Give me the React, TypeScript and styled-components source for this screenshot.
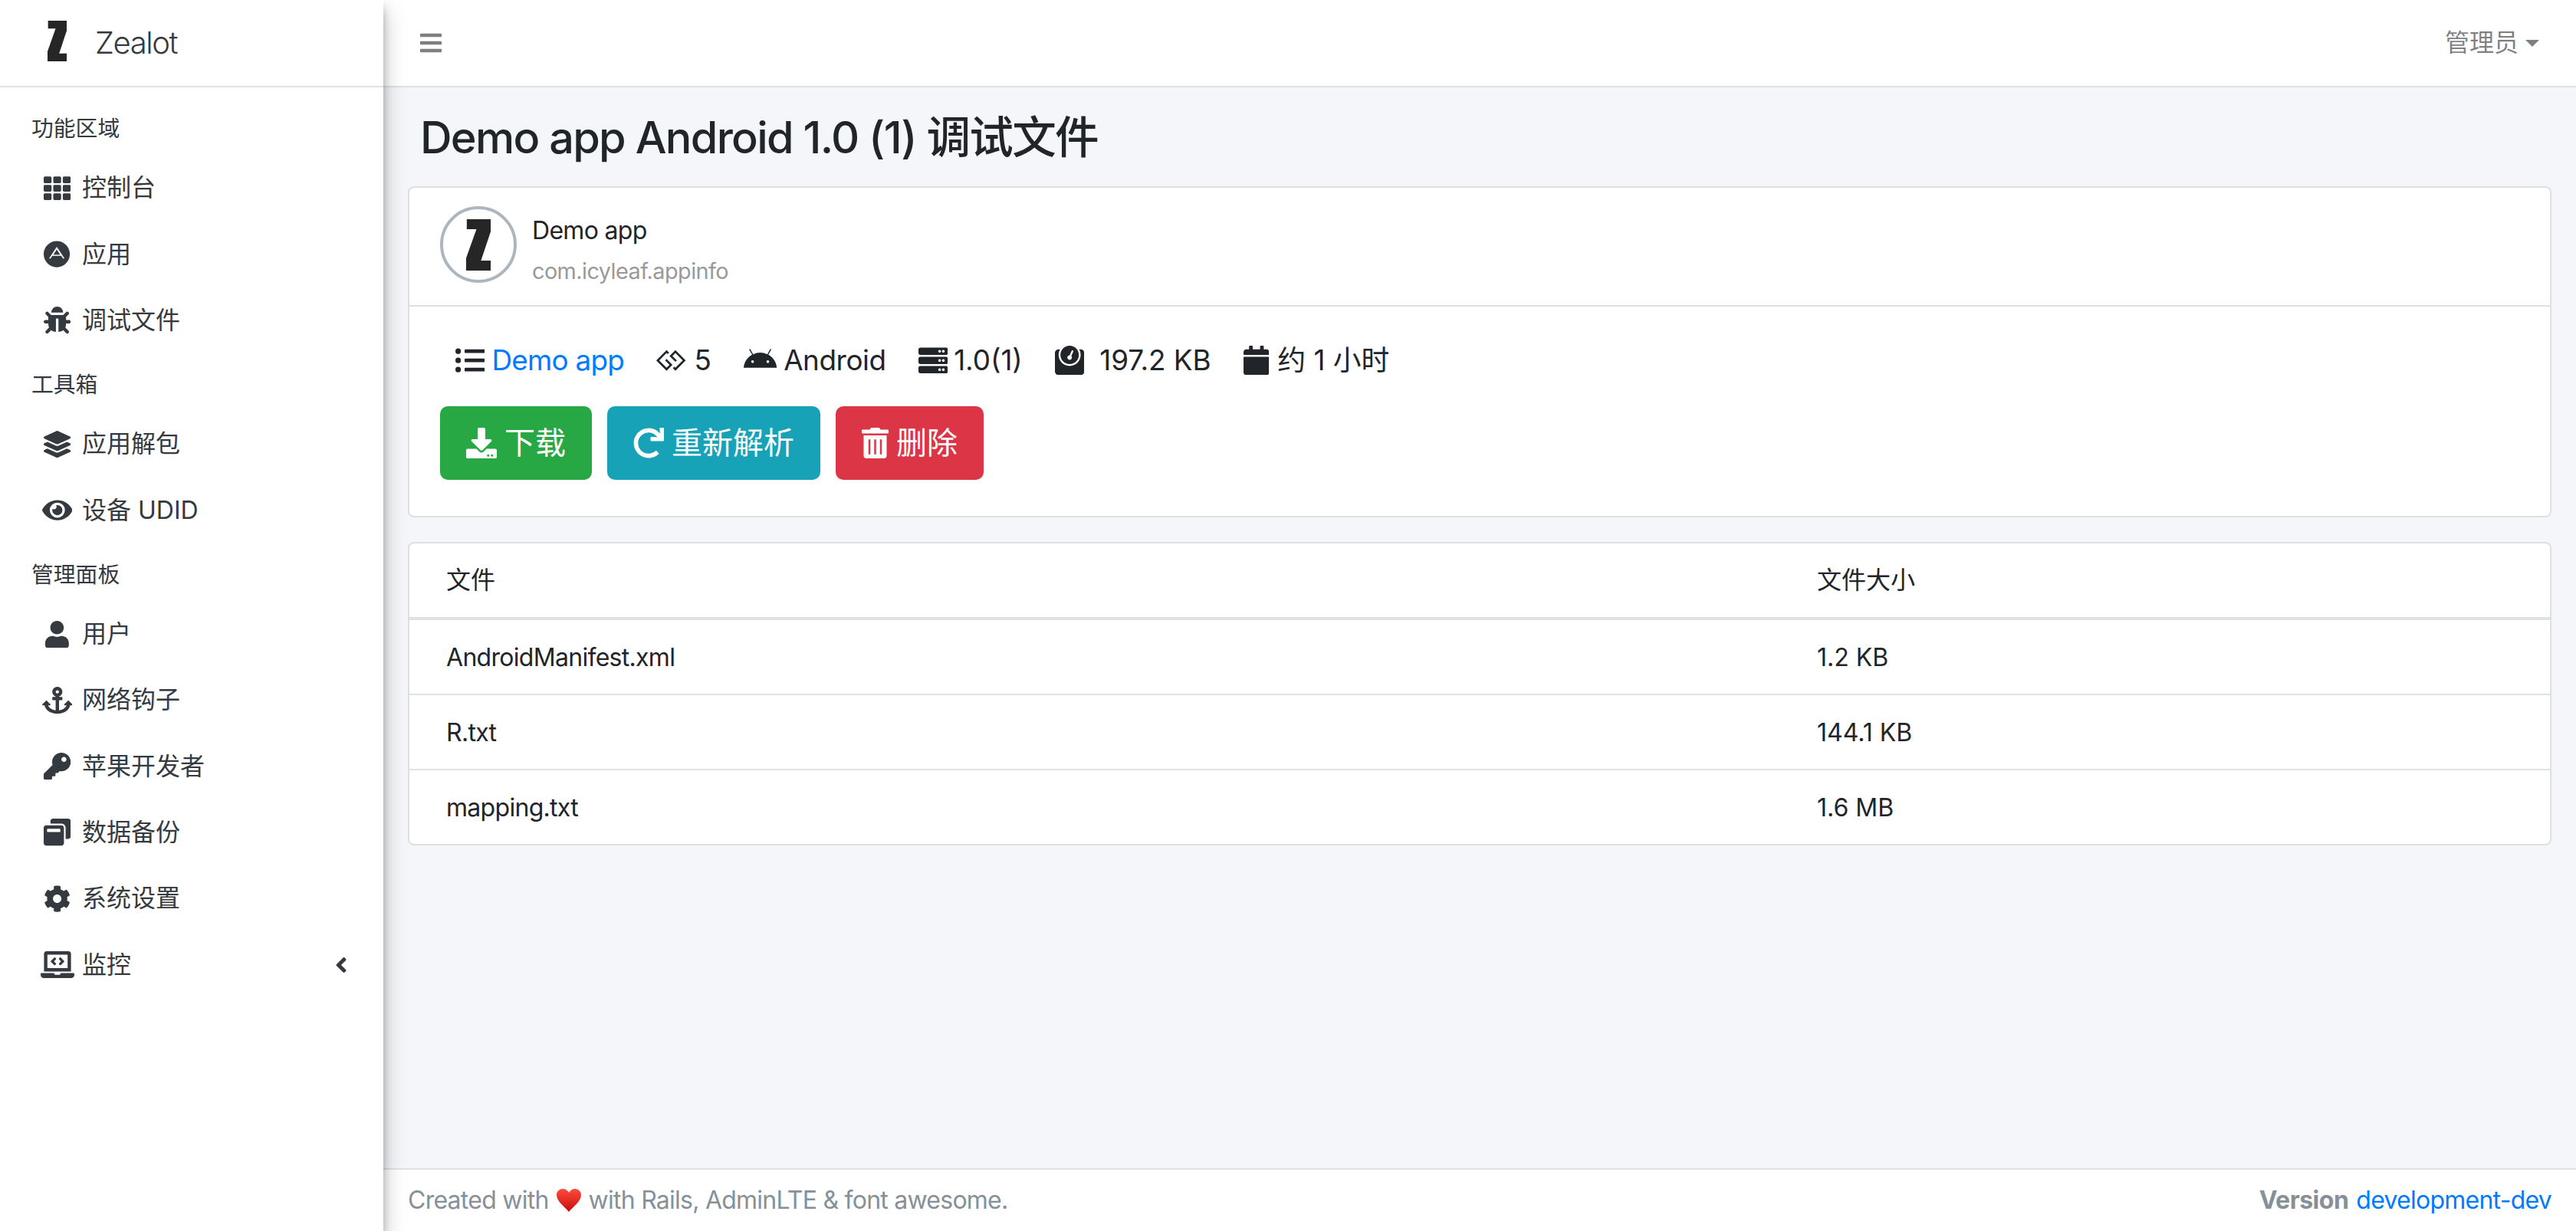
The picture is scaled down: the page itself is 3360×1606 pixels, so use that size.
import React, { FC, ReactNode } from "react";
import styled, { createGlobalStyle } from "styled-components";
import {
  FaAdn,
  FaAnchor,
  FaAndroid,
  FaAngleLeft,
  FaBars,
  FaBug,
  FaCalendar,
  FaCog,
  FaDownload,
  FaEye,
  FaGg,
  FaKey,
  FaLaptopCode,
  FaLayerGroup,
  FaListUl,
  FaRedo,
  FaServer,
  FaTh,
  FaTrashAlt,
  FaUser,
  FaWeight,
  FaWindowRestore,
} from "react-icons/fa";

const GlobalStyle = createGlobalStyle`
  html, body {
    margin: 0;
    padding: 0;
    height: 100%;
  }
  body {
    font-family: Inter, "Noto Sans CJK SC", sans-serif;
    font-size: 32px;
    line-height: 48px;
    color: #212529;
    background: #f4f6f9;
  }
  svg {
    display: block;
  }
`;

const Layout = styled.div`
  display: flex;
  width: 3360px;
  height: 1606px;
  overflow: hidden;
`;

const Sidebar = styled.aside`
  position: relative;
  z-index: 10;
  flex: 0 0 500px;
  background: #fff;
  color: #343a40;
  box-shadow: 0 14px 28px rgba(0, 0, 0, 0.25), 0 10px 10px rgba(0, 0, 0, 0.22);
`;

const Brand = styled.div`
  display: flex;
  align-items: center;
  box-sizing: border-box;
  height: 114px;
  padding-left: 62px;
  border-bottom: 2px solid #dee2e6;
`;

const BrandLogo = styled.svg`
  width: 25px;
  height: 53px;
  margin: 0 37px 6px 0;
`;

const BrandName = styled.span`
  font-size: 40px;
  font-weight: 300;
  letter-spacing: -1.4px;
`;

const SideNav = styled.nav`
  padding: 16px 16px 0;
`;

const NavHeader = styled.div`
  padding: 16px 25px;
  font-size: 28.8px;
  line-height: 43.2px;
`;

const NavLink = styled.a`
  display: flex;
  align-items: center;
  margin-bottom: 6.3px;
  padding: 16px 31px 16px 33px;
  line-height: 48px;
`;

/* font awesome glyphs are 512 units high, the width differs per icon */
const Glyph = styled.span<{ $units?: number }>`
  display: block;
  svg {
    height: 1em;
    width: ${(p) => (p.$units ?? 512) / 512}em;
  }
`;

const NavIcon = styled.span`
  flex: 0 0 51px;
  display: flex;
  justify-content: center;
  margin-right: 7px;
  font-size: 35.2px;
`;

const NavArrow = styled.span`
  margin-left: auto;
  font-size: 32px;
`;

const Main = styled.div`
  flex: 1;
  display: flex;
  flex-direction: column;
  min-width: 0;
`;

const TopBar = styled.header`
  display: flex;
  align-items: center;
  justify-content: space-between;
  box-sizing: border-box;
  height: 114px;
  padding: 0 48px;
  background: #fff;
  border-bottom: 2px solid #dee2e6;
  color: rgba(0, 0, 0, 0.5);
`;

const MenuToggle = styled.span`
  font-size: 32px;
`;

const UserMenu = styled.span`
  display: flex;
  align-items: center;
  gap: 9px;
`;

const Caret = styled.i`
  width: 0;
  height: 0;
  border-top: 9.6px solid currentColor;
  border-left: 9.6px solid transparent;
  border-right: 9.6px solid transparent;
`;

const Content = styled.main`
  flex: 1;
  padding: 0 32px;
`;

const PageTitle = styled.h1`
  margin: 0;
  padding: 31px 16px 29px;
  font-size: 57.6px;
  line-height: 69px;
  font-weight: 500;
  letter-spacing: -1.7px;
`;

const Card = styled.section`
  margin-bottom: 32px;
  background: #fff;
  border: 2px solid rgba(0, 0, 0, 0.125);
  border-radius: 8px;
  overflow: hidden;
`;

const CardHeader = styled.div`
  display: flex;
  align-items: center;
  padding: 24px 40px 29px;
  border-bottom: 2px solid rgba(0, 0, 0, 0.125);
`;

const Avatar = styled.div`
  display: flex;
  align-items: center;
  justify-content: center;
  box-sizing: border-box;
  width: 100px;
  height: 100px;
  margin-right: 20px;
  border: 4px solid #adb5bd;
  border-radius: 50%;
`;

const AvatarLogo = styled.svg`
  width: 32px;
  height: 67px;
`;

const AppInfo = styled.div`
  box-sizing: border-box;
  height: 100px;
  padding-top: 12px;
`;

const AppName = styled.div`
  font-size: 32px;
  line-height: 40px;
  letter-spacing: -0.7px;
  margin-bottom: 13px;
`;

const AppId = styled.div`
  font-size: 28.8px;
  line-height: 40px;
  letter-spacing: -0.55px;
  color: #999;
`;

const CardBody = styled.div`
  padding: 40px 40px 47px;
`;

const MetaRow = styled.div`
  display: flex;
  gap: 42px;
  padding-left: 20px;
  margin-bottom: 30px;
  font-size: 36.8px;
  line-height: 60px;
`;

const MetaItem = styled.span<{ $gap?: number }>`
  display: flex;
  align-items: center;
  gap: ${(p) => p.$gap ?? 11}px;
`;

const MetaIcon = styled(Glyph)`
  font-size: 38.4px;
`;

const MetaText = styled.span`
  letter-spacing: -0.4px;
`;

const MetaLink = styled.span`
  color: #007bff;
  letter-spacing: -0.7px;
`;

const Actions = styled.div`
  display: flex;
  gap: 20px;
`;

const Button = styled.a<{ $color: string }>`
  display: flex;
  align-items: center;
  gap: 10px;
  box-sizing: border-box;
  height: 96px;
  padding: 0 34px;
  border-radius: 10px;
  background: ${(p) => p.$color};
  color: #fff;
  font-size: 40px;
`;

const FileTable = styled.table`
  width: 100%;
  table-layout: fixed;
  border-collapse: collapse;
  th,
  td {
    padding: 24px 48px;
    text-align: left;
    font-weight: 400;
  }
  th {
    border-bottom: 4px solid #dee2e6;
  }
  td {
    padding: 25px 48px 23px;
    border-top: 2px solid #dee2e6;
  }
  tbody tr:first-child td {
    border-top: 0;
  }
`;

const NameColumn = styled.col`
  width: 1788px;
`;

const FileName = styled.td`
  letter-spacing: -0.7px;
`;

const Footer = styled.footer`
  display: flex;
  align-items: center;
  justify-content: space-between;
  box-sizing: border-box;
  height: 82px;
  padding: 0 32px;
  background: #fff;
  border-top: 2px solid #dee2e6;
  color: #869099;
  letter-spacing: -0.75px;
`;

const FooterText = styled.span`
  display: flex;
  align-items: center;
  gap: 10px;
`;

const VersionLabel = styled.b`
  font-weight: 700;
  letter-spacing: -0.5px;
`;

const VersionLink = styled.a`
  color: #007bff;
  margin-left: 10px;
`;

const ZMark: FC = () => (
  <polygon
    points="2,0 76,0 76,38 46,126 76,126 76,156 0,156 0,118 32,30 2,30"
    fill="#262626"
  />
);

const Heart: FC = () => (
  <svg width="32" height="30" viewBox="0 0 32 30">
    <defs>
      <linearGradient id="heartFill" x1="0" y1="0" x2="0" y2="1">
        <stop offset="0" stopColor="#ff4a3d" />
        <stop offset="1" stopColor="#c80d0d" />
      </linearGradient>
    </defs>
    <path
      d="M16 30C10 23 0 16 0 8 0 3 4 0 8 0c3.500 0 6.500 2 8 5 1.500-3 4.500-5 8-5 4 0 8 3 8 8 0 8-10 15-16 22z"
      fill="url(#heartFill)"
    />
  </svg>
);

type NavEntry =
  | { header: string }
  | { label: string; icon: ReactNode; units?: number; arrow?: boolean };

const navEntries: NavEntry[] = [
  { header: "功能区域" },
  { label: "控制台", icon: <FaTh /> },
  { label: "应用", icon: <FaAdn />, units: 496 },
  { label: "调试文件", icon: <FaBug /> },
  { header: "工具箱" },
  { label: "应用解包", icon: <FaLayerGroup /> },
  { label: "设备 UDID", icon: <FaEye />, units: 576 },
  { header: "管理面板" },
  { label: "用户", icon: <FaUser />, units: 448 },
  { label: "网络钩子", icon: <FaAnchor />, units: 576 },
  { label: "苹果开发者", icon: <FaKey /> },
  { label: "数据备份", icon: <FaWindowRestore /> },
  { label: "系统设置", icon: <FaCog /> },
  { label: "监控", icon: <FaLaptopCode />, units: 640, arrow: true },
];

const files = [
  { name: "AndroidManifest.xml", size: "1.2 KB" },
  { name: "R.txt", size: "144.1 KB" },
  { name: "mapping.txt", size: "1.6 MB" },
];

export default function App() {
  return (
    <>
      <GlobalStyle />
      <Layout>
        <Sidebar>
          <Brand>
            <BrandLogo viewBox="0 0 76 156" preserveAspectRatio="none">
              <ZMark />
            </BrandLogo>
            <BrandName>Zealot</BrandName>
          </Brand>
          <SideNav>
            {navEntries.map((entry) =>
              "header" in entry ? (
                <NavHeader key={entry.header}>{entry.header}</NavHeader>
              ) : (
                <NavLink key={entry.label}>
                  <NavIcon>
                    <Glyph $units={entry.units}>{entry.icon}</Glyph>
                  </NavIcon>
                  {entry.label}
                  {entry.arrow && (
                    <NavArrow>
                      <Glyph $units={256}>
                        <FaAngleLeft />
                      </Glyph>
                    </NavArrow>
                  )}
                </NavLink>
              )
            )}
          </SideNav>
        </Sidebar>
        <Main>
          <TopBar>
            <MenuToggle>
              <Glyph $units={448}>
                <FaBars />
              </Glyph>
            </MenuToggle>
            <UserMenu>
              管理员
              <Caret />
            </UserMenu>
          </TopBar>
          <Content>
            <PageTitle>Demo app Android 1.0 (1) 调试文件</PageTitle>
            <Card>
              <CardHeader>
                <Avatar>
                  <AvatarLogo viewBox="0 0 76 156" preserveAspectRatio="none">
                    <ZMark />
                  </AvatarLogo>
                </Avatar>
                <AppInfo>
                  <AppName>Demo app</AppName>
                  <AppId>com.icyleaf.appinfo</AppId>
                </AppInfo>
              </CardHeader>
              <CardBody>
                <MetaRow>
                  <MetaItem $gap={9}>
                    <MetaIcon>
                      <FaListUl />
                    </MetaIcon>
                    <MetaLink>Demo app</MetaLink>
                  </MetaItem>
                  <MetaItem>
                    <MetaIcon>
                      <FaGg />
                    </MetaIcon>
                    5
                  </MetaItem>
                  <MetaItem $gap={9}>
                    <MetaIcon $units={576}>
                      <FaAndroid />
                    </MetaIcon>
                    <MetaText>Android</MetaText>
                  </MetaItem>
                  <MetaItem $gap={8}>
                    <MetaIcon>
                      <FaServer />
                    </MetaIcon>
                    1.0(1)
                  </MetaItem>
                  <MetaItem $gap={20}>
                    <MetaIcon>
                      <FaWeight />
                    </MetaIcon>
                    197.2 KB
                  </MetaItem>
                  <MetaItem>
                    <MetaIcon $units={448}>
                      <FaCalendar />
                    </MetaIcon>
                    约 1 小时
                  </MetaItem>
                </MetaRow>
                <Actions>
                  <Button $color="#28a745">
                    <Glyph>
                      <FaDownload />
                    </Glyph>
                    下载
                  </Button>
                  <Button $color="#17a2b8">
                    <Glyph>
                      <FaRedo />
                    </Glyph>
                    重新解析
                  </Button>
                  <Button $color="#dc3545">
                    <Glyph $units={448}>
                      <FaTrashAlt />
                    </Glyph>
                    删除
                  </Button>
                </Actions>
              </CardBody>
            </Card>
            <Card>
              <FileTable>
                <colgroup>
                  <NameColumn />
                  <col />
                </colgroup>
                <thead>
                  <tr>
                    <th>文件</th>
                    <th>文件大小</th>
                  </tr>
                </thead>
                <tbody>
                  {files.map((file) => (
                    <tr key={file.name}>
                      <FileName>{file.name}</FileName>
                      <td>{file.size}</td>
                    </tr>
                  ))}
                </tbody>
              </FileTable>
            </Card>
          </Content>
          <Footer>
            <FooterText>
              Created with <Heart /> with Rails, AdminLTE &amp; font awesome.
            </FooterText>
            <span>
              <VersionLabel>Version</VersionLabel>
              <VersionLink>development-dev</VersionLink>
            </span>
          </Footer>
        </Main>
      </Layout>
    </>
  );
}
